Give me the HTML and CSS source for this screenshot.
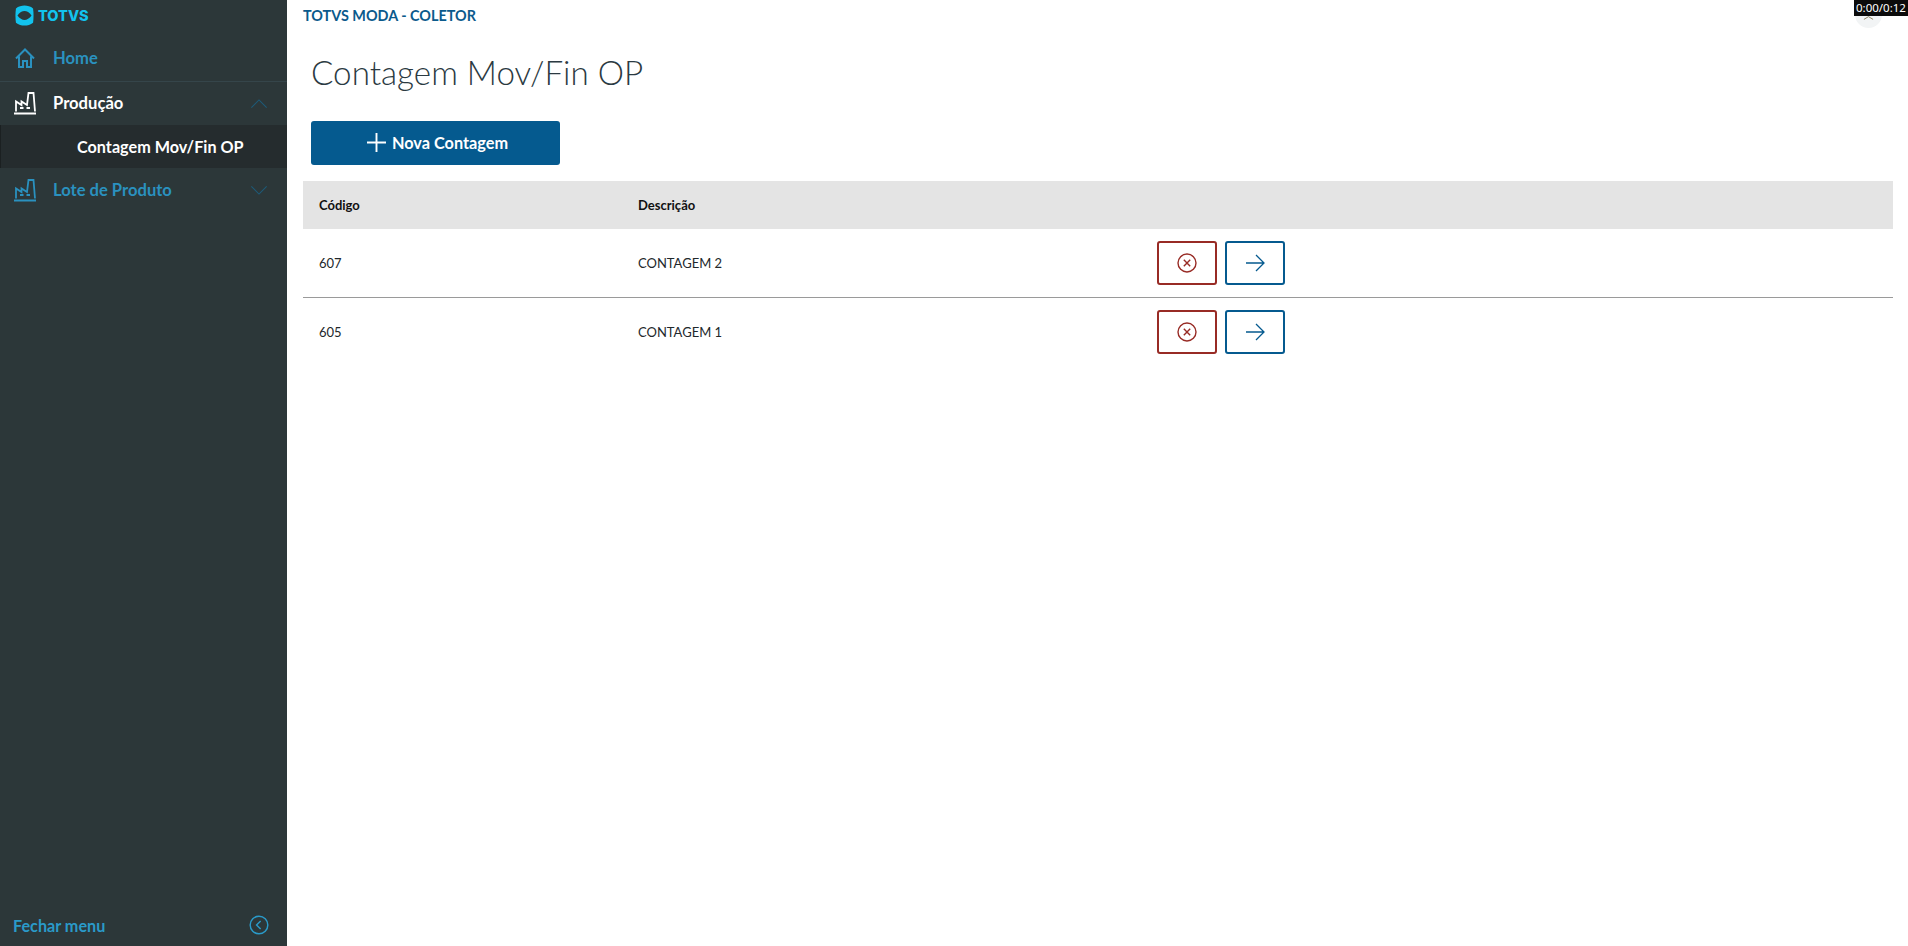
FILE: index.html
```html
<!DOCTYPE html>
<html lang="pt-BR">
<head>
<meta charset="utf-8">
<title>Contagem Mov/Fin OP</title>
<link rel="stylesheet" href="styles.css">
</head>
<body>
<div class="app">
  <aside class="sidebar">
    <div class="logo">
      <svg class="logo-mark" viewBox="0 0 20 22"><path d="M10 .5C13 .5 16.500 1.500 19 3.500 19.700 8 19.700 14 19 18.500 16.500 20.500 13 21.500 10 21.500S3.500 20.500 1 18.500C.3 14 .3 8 1 3.500 3.500 1.500 7 .5 10 .5Z" fill="#12c3ee"/><path d="M2.600 11C4.800 7.800 7.500 6.300 10 6.300S15.200 7.800 17.400 11C15.200 14.200 12.500 15.700 10 15.700S4.800 14.200 2.600 11Z" fill="#2c3739"/></svg>
      <span class="logo-text">TOTVS</span>
    </div>
    <nav class="nav">
      <a class="nav-item nav-home">
        <svg class="nav-icon" viewBox="0 0 24 24" fill="none" stroke="currentColor" stroke-width="2"><path d="M3 12.500 12 3.500l9 9M6 10.500V21h4v-6h4v6h4V10.500"/></svg>
        <span class="nav-label">Home</span>
      </a>
      <a class="nav-item nav-open">
        <svg class="nav-icon" viewBox="0 0 24 24" fill="none" stroke="currentColor" stroke-width="1.800"><path d="M1 22.500h22M3 20.500V10.500l5.500 3.500v-3.500l5.500 3.500 1.500-12h5L22 20.500M7 17h3.500M13.500 17H17"/></svg>
        <span class="nav-label">Produção</span>
        <svg class="chevron" viewBox="0 0 20 12" fill="none" stroke="currentColor" stroke-width="1.200"><path d="M1.500 10.500 10 2l8.500 8.500"/></svg>
      </a>
      <a class="nav-sub">Contagem Mov/Fin OP</a>
      <a class="nav-item">
        <svg class="nav-icon" viewBox="0 0 24 24" fill="none" stroke="currentColor" stroke-width="1.800"><path d="M1 22.500h22M3 20.500V10.500l5.500 3.500v-3.500l5.500 3.500 1.500-12h5L22 20.500M7 17h3.500M13.500 17H17"/></svg>
        <span class="nav-label">Lote de Produto</span>
        <svg class="chevron" viewBox="0 0 20 12" fill="none" stroke="currentColor" stroke-width="1.200"><path d="M1.500 1.500 10 10l8.500-8.500"/></svg>
      </a>
    </nav>
    <div class="side-footer">
      <span>Fechar menu</span>
      <svg class="footer-icon" viewBox="0 0 22 22" fill="none" stroke="currentColor" stroke-width="1.600"><circle cx="11" cy="11" r="9.700"/><path d="M12.800 6.500 8.300 11l4.500 4.500"/></svg>
    </div>
  </aside>
  <main class="main">
    <header class="topbar">
      <span class="brand">TOTVS MODA - COLETOR</span>
      <span class="avatar"><svg class="avatar-icon" viewBox="0 0 12 4" fill="none" stroke="#8a7f5a" stroke-width="1"><path d="M1 3.500 6 .5l5 3"/></svg></span>
      <span class="timer">0:00/0:12</span>
    </header>
    <h1 class="title">Contagem Mov/Fin OP</h1>
    <button class="primary">
      <svg class="plus" viewBox="0 0 18 18" fill="none" stroke="currentColor" stroke-width="1.800"><path d="M9 0v18M0 9h18"/></svg>
      <span>Nova Contagem</span>
    </button>
    <div class="table">
      <div class="row head">
        <span class="c-code">Código</span>
        <span class="c-desc">Descrição</span>
      </div>
      <div class="row line">
        <span class="c-code">607</span>
        <span class="c-desc">CONTAGEM 2</span>
        <div class="actions">
          <button class="btn danger"><svg class="ico" viewBox="0 0 20 20" fill="none" stroke="currentColor" stroke-width="1.400"><circle cx="10" cy="10" r="9"/><path d="M6.800 6.800l6.400 6.400M13.200 6.800l-6.400 6.400"/></svg></button>
          <button class="btn go"><svg class="ico-arrow" viewBox="0 0 20 18" fill="none" stroke="currentColor" stroke-width="1.300"><path d="M1 9h18M11 1l8 8-8 8"/></svg></button>
        </div>
      </div>
      <div class="row">
        <span class="c-code">605</span>
        <span class="c-desc">CONTAGEM 1</span>
        <div class="actions">
          <button class="btn danger"><svg class="ico" viewBox="0 0 20 20" fill="none" stroke="currentColor" stroke-width="1.400"><circle cx="10" cy="10" r="9"/><path d="M6.800 6.800l6.400 6.400M13.200 6.800l-6.400 6.400"/></svg></button>
          <button class="btn go"><svg class="ico-arrow" viewBox="0 0 20 18" fill="none" stroke="currentColor" stroke-width="1.300"><path d="M1 9h18M11 1l8 8-8 8"/></svg></button>
        </div>
      </div>
    </div>
  </main>
</div>
</body>
</html>
```
FILE: styles.css
```css
* { box-sizing: border-box; }
html, body { margin: 0; height: 100%; overflow: hidden; }
body { font-family: "Lato", "Noto Sans", sans-serif; background: #fff; color: #1c1c1c; }
.app { display: flex; height: 946px; }

.sidebar { width: 287px; flex: none; display: flex; flex-direction: column; background: #2c3739; color: #2a9ac9; }
.logo { height: 35px; display: flex; align-items: center; gap: 4px; padding: 0 0 5px 15px; }
.logo-mark { width: 19px; height: 21px; }
.logo-text { font: 800 14.500px "Inter", sans-serif; letter-spacing: 0; color: #12c3ee; }
.nav { flex: 1; display: flex; flex-direction: column; }
.nav-item { height: 45px; display: flex; align-items: center; padding: 0 19px 1px 13px; font-size: 16.600px; font-weight: 700; color: #2a91bf; }
.nav-home { height: 47px; padding-bottom: 0; border-bottom: 1px solid #35454a; }
.nav-open { height: 43px; color: #fff; }
.nav-icon { width: 24px; height: 24px; flex: none; }
.nav-label { margin-left: 16px; flex: 1; }
.chevron { width: 18px; height: 11px; color: #1d5a78; }
.nav-sub { height: 43px; display: flex; align-items: center; padding: 0 0 1px 76px; background: #252c2e; color: #fff; font-size: 16.200px; font-weight: 700; border-left: 1px solid #1b2021; }
.side-footer { height: 42px; display: flex; align-items: center; justify-content: space-between; padding: 0 18px 0 13px; font-size: 16.200px; font-weight: 700; color: #2a9ac9; }
.footer-icon { width: 20px; height: 20px; }

.main { flex: 1; min-width: 0; padding: 0 15px 0 16px; }
.topbar { height: 33px; display: flex; align-items: center; padding-bottom: 2px; position: relative; }
.brand { font-size: 14.400px; font-weight: 700; color: #0b5a8c; }
.avatar { position: absolute; right: 11px; top: 1px; width: 27px; height: 27px; border-radius: 50%; background: #f2f4f5; }
.avatar-icon { position: absolute; left: 8px; top: 15px; width: 11px; height: 4px; }
.timer { position: absolute; top: 0; right: -15px; width: 54px; height: 16px; background: #0b0b0b; color: #fff; font: 11.500px/16px "Noto Sans", sans-serif; text-align: center; }
.title { margin: 0 0 0 8px; height: 88px; padding-top: 19px; font-size: 33.200px; line-height: 40px; font-weight: 300; color: #2b3a42; }
.primary { margin-left: 8px; width: 249px; height: 44px; display: flex; align-items: center; justify-content: center; gap: 6px; padding: 0 0 2px 4px; border: 0; border-radius: 3px; background: #055a8f; color: #fff; font: 700 16.300px "Lato", sans-serif; }
.plus { width: 19px; height: 19px; }
.table { margin-top: 16px; }
.row { display: flex; align-items: center; height: 68px; font-size: 13px; color: #22282b; }
.head { height: 48px; background: #e4e4e4; font-weight: 700; color: #111; }
.line { height: 69px; border-bottom: 1px solid #9a9a9a; }
.c-code { width: 319px; padding-left: 16px; }
.c-desc { width: 535px; padding-left: 0; text-indent: 16px; }
.actions { display: flex; gap: 8px; }
.btn { width: 60px; height: 44px; display: flex; align-items: center; justify-content: center; padding: 0; background: #fff; border: 2px solid; border-radius: 3px; }
.danger { color: #982b25; }
.go { color: #055a8f; }
.ico { width: 20px; height: 20px; }
.ico-arrow { width: 20px; height: 18px; }
```
